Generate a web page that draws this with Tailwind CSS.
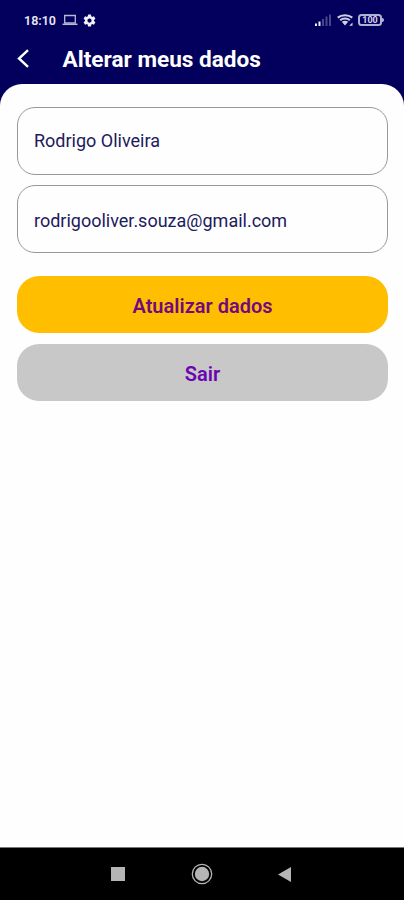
<!DOCTYPE html>
<html lang="pt-BR">
<head>
<meta charset="utf-8">
<meta name="viewport" content="width=device-width, initial-scale=1">
<title>Alterar meus dados</title>
<script src="https://cdn.jsdelivr.net/npm/@tailwindcss/browser@4"></script>
</head>
<body class="flex h-[900px] w-[404px] flex-col overflow-hidden bg-[#02005c] font-[Roboto,sans-serif]">
  <div class="flex h-10 shrink-0 items-center justify-between pr-5 pl-6 text-[#e6e6f2]">
    <div class="flex items-center">
      <span class="w-[33px] pt-px text-[12.5px] leading-4 font-semibold whitespace-nowrap">18:10</span>
      <svg class="ml-[5px] h-3 w-4" viewBox="0 0 16 12" fill="none" stroke="#b9b9d6"><path d="M2.7 9V1.5h10.6V9z" stroke-width="1.3"/><path d="M.5 10.3h15" stroke-width="1.5"/></svg>
      <svg class="ml-[4px] h-[15px] w-[15px]" viewBox="0 0 24 24" fill="#f0f0fa"><path d="M19.14 12.94c.04-.3.06-.61.06-.94s-.02-.64-.07-.94l2.03-1.58a.5.5 0 0 0 .12-.61l-1.92-3.32a.49.49 0 0 0-.59-.22l-2.39.96a7 7 0 0 0-1.62-.94l-.36-2.54A.48.48 0 0 0 13.92 2.4h-3.84a.47.47 0 0 0-.47.41l-.36 2.54c-.59.24-1.13.57-1.62.94l-2.39-.96a.48.48 0 0 0-.59.22L2.74 8.87a.47.47 0 0 0 .12.61l2.03 1.58a6 6 0 0 0-.02 1.88l-2.03 1.58a.5.5 0 0 0-.12.61l1.92 3.32c.12.22.37.29.59.22l2.39-.96c.5.38 1.03.7 1.62.94l.36 2.54c.05.24.24.41.48.41h3.84c.24 0 .44-.17.47-.41l.36-2.54a7 7 0 0 0 1.62-.94l2.39.96c.22.08.47 0 .59-.22l1.92-3.32a.47.47 0 0 0-.12-.61zM12 15.4a3.4 3.4 0 1 1 0-6.8 3.4 3.4 0 0 1 0 6.8z"/></svg>
    </div>
    <div class="flex items-center">
      <svg class="h-3 w-4" viewBox="0 0 16 12"><path d="M0 9.5h2V12H0zM3.5 7.5h2V12h-2z" fill="#f0f0fa"/><path d="M7 5h2v7H7zM10.5 2.5h2V12h-2zM14 .5h2V12h-2z" fill="#46468a"/></svg>
      <svg class="ml-[6px] h-3 w-4" viewBox="0 0 16 12" fill="none" stroke="#cfcfe6" stroke-width="2"><path d="M.7 3.600C4.800.300 11.200.300 15.300 3.600M3.200 6.200C5.800 4 10.200 4 12.800 6.200"/><path d="M4.800 7.800C6.600 6.500 9.400 6.500 11.200 7.800L8 11.500z" fill="#cfcfe6" stroke="none"/><path d="M15.500 8.500v3.300h-3.300z" fill="#cfcfe6" stroke="none"/></svg>
      <div class="ml-[5px] flex items-center">
        <div class="flex h-3 w-[24px] items-center justify-center rounded-[3.5px] border-2 border-[#b0b0d2] text-[9px] leading-none font-bold text-[#d5d5ea]">100</div>
        <div class="h-1 w-[2px] rounded-r-full bg-[#b9b9d8]"></div>
      </div>
    </div>
  </div>
  <header class="flex h-11 shrink-0 items-start pl-[17px] text-white">
    <svg class="mt-2 h-[21px] w-[13px]" viewBox="0 0 13 21" fill="none" stroke="white" stroke-width="2.4"><path d="M11 2.200 2 10.500l9 8.300"/></svg>
    <h1 class="ml-[32.5px] mt-[6px] text-[22.6px] leading-7 font-bold whitespace-nowrap">Alterar meus dados</h1>
  </header>
  <main class="flex grow flex-col rounded-t-[22px] bg-[#fefefe] pt-[22.5px] pr-[16px] pl-[17px]">
    <div class="flex h-[68px] shrink-0 items-center rounded-[18px] border border-[#989898] px-[16px] text-[18px] text-[#211a5c]">Rodrigo Oliveira</div>
    <div class="mt-[10.5px] flex h-[68px] shrink-0 items-center rounded-[18px] border border-[#989898] px-[16px] pt-[2px] text-[18px] text-[#211a5c]">rodrigooliver.souza@gmail.com</div>
    <button class="mt-[23px] h-[57px] shrink-0 rounded-[22px] bg-[#ffbf00] pt-[3px] text-[20px] font-semibold text-[#74087f]">Atualizar dados</button>
    <button class="mt-[11px] h-[57px] shrink-0 rounded-[22px] bg-[#c8c8c8] pt-[3px] text-[20px] font-semibold text-[#6a05b0]">Sair</button>
  </main>
  <nav class="flex h-[53px] shrink-0 items-center border-t border-[#777] bg-black pl-[111px]">
    <div class="h-[14px] w-[14px] bg-[#b5b5b5]"></div>
    <svg class="ml-[66px] h-[22px] w-[22px]" viewBox="0 0 22 22"><circle cx="11" cy="11" r="9.700" fill="none" stroke="#b5b5b5" stroke-width="1.300"/><circle cx="11" cy="11" r="7.200" fill="#b5b5b5"/></svg>
    <svg class="ml-[65px] h-[15px] w-[13px]" viewBox="0 0 13 15"><path d="M13 0v15L0 7.500z" fill="#b5b5b5"/></svg>
  </nav>
</body>
</html>
